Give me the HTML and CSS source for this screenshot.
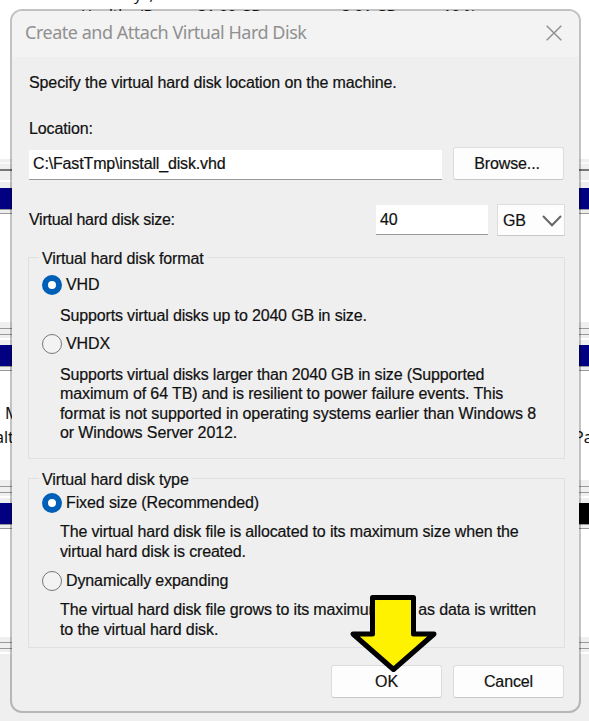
FILE: index.html
```
<!DOCTYPE html>
<html lang="en">
<head>
<meta charset="utf-8">
<title>Create and Attach Virtual Hard Disk</title>
<link rel="stylesheet" href="styles.css">
</head>
<body>
<div class="desktop">
  <div class="volumes"><span class="v1">y ,</span><span class="v2">Healthy (Bas</span><span class="v3">31.00 GB</span><span class="v4">3.01 GB</span><span class="v5">10 %</span></div>
  <div class="split first"></div>
  <div class="bar"></div>
  <div class="pane"></div>
  <div class="split"></div>
  <div class="bar"></div>
  <div class="pane labels">
    <div class="side"><p>M</p><p>alt</p></div>
    <div class="side right"><p>&nbsp;</p><p>Pa</p></div>
  </div>
  <div class="split"></div>
  <div class="bar unallocated"></div>
  <div class="pane"></div>
  <div class="split last"></div>
</div>

<main class="dialog">
  <header class="titlebar">
    <h1>Create and Attach Virtual Hard Disk</h1>
    <svg class="close" width="16" height="16" viewBox="0 0 16 16"><path d="M.7 .7L15.3 15.3M15.3 .7L.7 15.3"/></svg>
  </header>
  <div class="body">
    <p class="intro">Specify the virtual hard disk location on the machine.</p>
    <p class="caption">Location:</p>
    <div class="location-row">
      <div class="input path">C:\FastTmp\install_disk.vhd</div>
      <div class="button browse">Browse...</div>
    </div>
    <div class="size-row">
      <span class="size-label">Virtual hard disk size:</span>
      <div class="input size">40</div>
      <div class="select"><span>GB</span><svg width="20" height="12" viewBox="0 0 20 12"><path d="M1 1L10 10.3L19 1"/></svg></div>
    </div>
    <section class="group format">
      <h2>Virtual hard disk format</h2>
      <div class="option"><i class="radio on"></i>VHD</div>
      <p class="help tight">Supports virtual disks up to 2040 GB in size.</p>
      <div class="option"><i class="radio"></i>VHDX</div>
      <p class="help"><span class="tight">Supports virtual disks larger than 2040 GB in size (Supported</span><br>maximum of 64 TB) and is resilient to power failure events. This<br><span class="loose">format is not supported in operating systems earlier than Windows 8</span><br>or Windows Server 2012.</p>
    </section>
    <section class="group type">
      <h2>Virtual hard disk type</h2>
      <div class="option"><i class="radio on"></i>Fixed size (Recommended)</div>
      <p class="help"><span class="snug">The virtual hard disk file is allocated to its maximum size when the</span><br><span class="tight">virtual hard disk is created.</span></p>
      <div class="option"><i class="radio"></i>Dynamically expanding</div>
      <p class="help"><span class="snug">The virtual hard disk file grows to its maximum size as data is written</span><br>to the virtual hard disk.</p>
    </section>
    <footer class="actions">
      <div class="button">OK</div>
      <div class="button">Cancel</div>
    </footer>
  </div>
</main>
<svg class="arrow" width="90" height="82" viewBox="348 593 90 82"><path d="M372.5 597.5H413.5V634H434L393.5 669.5L353 634H372.5Z"/></svg>
</body>
</html>
```
FILE: styles.css
```
* { box-sizing: border-box; }
body { margin: 0; width: 589px; height: 721px; overflow: hidden; position: relative; background: #efefef; color: #111; font: 16px/19.6px "Liberation Sans", Arial, sans-serif; }
h1, h2, p { margin: 0; font-weight: 400; }

.desktop { height: 721px; display: flex; flex-direction: column; font-family: "Noto Sans", sans-serif; }
.volumes { position: relative; height: 159px; background: #fff; overflow: hidden; flex: none; }
.volumes span { position: absolute; top: 5px; font-size: 15px; white-space: nowrap; }
.volumes .v1 { left: 134px; top: -15px; word-spacing: 4px; }
.volumes .v2 { left: 81px; }
.volumes .v3 { left: 198px; }
.volumes .v4 { left: 342px; }
.volumes .v5 { left: 443px; }
.split { height: 23px; flex: none; background: linear-gradient(#efefef 0 6px, #999 6px 7px, #efefef 7px 12px, #999 12px 13px, #efefef 13px 16px, #fff 16px 18px, #efefef 18px); }
.split.first { height: 29px; background: linear-gradient(#efefef 0 3px, #fafafa 3px 5px, #efefef 5px 10px, #777 10px 12px, #efefef 12px 21px, #fff 21px 23px, #efefef 23px); }
.split.last { background: linear-gradient(#efefef 0 5px, #999 5px 6px, #efefef 6px 11px, #999 11px 12px, #efefef 12px 15px, #fff 15px 17px, #efefef 17px); }
.bar { height: 27px; flex: none; background: linear-gradient(#000080 0 21px, #999 21px 22px, #eee 22px 25px, #999 25px 26px, #fff 26px); }
.unallocated { background: linear-gradient(#000080 0 21px, #999 21px 22px, #eee 22px 25px, #999 25px 26px, #fff 26px) left / 300px 27px no-repeat, linear-gradient(#000 0 21px, #999 21px 22px, #eee 22px 25px, #999 25px 26px, #fff 26px); }
.pane { height: 107px; flex: none; background: #fff; }
.labels { height: 108px; display: flex; justify-content: space-between; padding-top: 29px; line-height: 24px; font-size: 16px; }
.side { width: 30px; padding-left: 5px; white-space: nowrap; }
.side p + p { margin-left: -10px; }
.side.right { width: 14px; padding: 0; }
.side.right p + p { margin-left: -1px; }

.dialog { position: absolute; left: 10px; top: 9px; width: 571px; height: 704px; border: 2px solid rgba(0,0,0,.24); border-radius: 12px; background: #efefef; background-clip: padding-box; overflow: hidden; }
.titlebar { height: 46px; background: #f3f3f3; display: flex; justify-content: space-between; padding: 14px 17px 0 13px; }
h1 { font: 18px/15px "Noto Sans", sans-serif; letter-spacing: -.48px; color: #909090; white-space: nowrap; }
.close { fill: none; stroke: #8e8e8e; stroke-width: 1.4; }
.body { padding: 16px 14px 0 17px; letter-spacing: -.11px; -webkit-text-stroke: .2px #111; }
.intro { height: 45px; line-height: 20px; }
.caption { line-height: 21px; height: 29px; }
.location-row { display: flex; justify-content: space-between; height: 33px; }
.input { height: 30px; padding: 0 4px; line-height: 28px; background: #fff; border-bottom: 1px solid #999; }
.path { width: 413px; margin-top: 3px; letter-spacing: -.15px; }
.button { width: 111px; height: 33px; line-height: 32px; text-align: center; background: #fdfdfd; border: 1px solid #dcdcdc; border-bottom-color: #c8c8c8; border-radius: 3px; margin-right: 1px; }
.browse { padding-right: 3px; }
.size-row { display: flex; align-items: flex-start; margin-top: 24px; height: 53px; }
.size-label { flex: 1; line-height: 31px; letter-spacing: -.26px; }
.size { width: 112px; margin: 1px 9px 0 0; line-height: 29px; }
.select { width: 68px; height: 32px; padding: 1px 2px 0 5px; display: flex; align-items: center; justify-content: space-between; background: #fdfdfd; border: 1px solid #dedede; border-bottom-color: #c8c8c8; }
.select svg { fill: none; stroke: #666; stroke-width: 2; }
.group { border: 1px solid #e0e0e0; margin-left: -1px; padding: 0 0 0 13px; }
.group h2 { font-size: 16px; line-height: 20px; width: max-content; margin: -9px 0 5px -3px; padding: 0 3px; background: #efefef; }
.format { height: 202px; }
.type { height: 170px; margin-top: 19px; }
.type h2 { margin-bottom: 2px; }
.option { display: flex; align-items: center; height: 21px; gap: 4px; }
.radio { width: 20px; height: 20px; border: 1px solid #777; border-radius: 50%; background: #f3f3f3; }
.radio.on { border: 6px solid #0060b8; background: #fff; }
.help { margin: 10px 0 8px 18px; white-space: nowrap; }
.format .help.tight { margin-top: 11px; }
.type .help { margin-top: 9px; margin-bottom: 9px; }
.tight { letter-spacing: -.16px; }
.snug { letter-spacing: -.135px; }
.loose { letter-spacing: -.09px; }
.actions { display: flex; justify-content: flex-end; gap: 10px; margin-top: 17px; }
.arrow { position: absolute; left: 348px; top: 593px; fill: #fff200; stroke: #000; stroke-width: 5; stroke-linejoin: round; }
```
